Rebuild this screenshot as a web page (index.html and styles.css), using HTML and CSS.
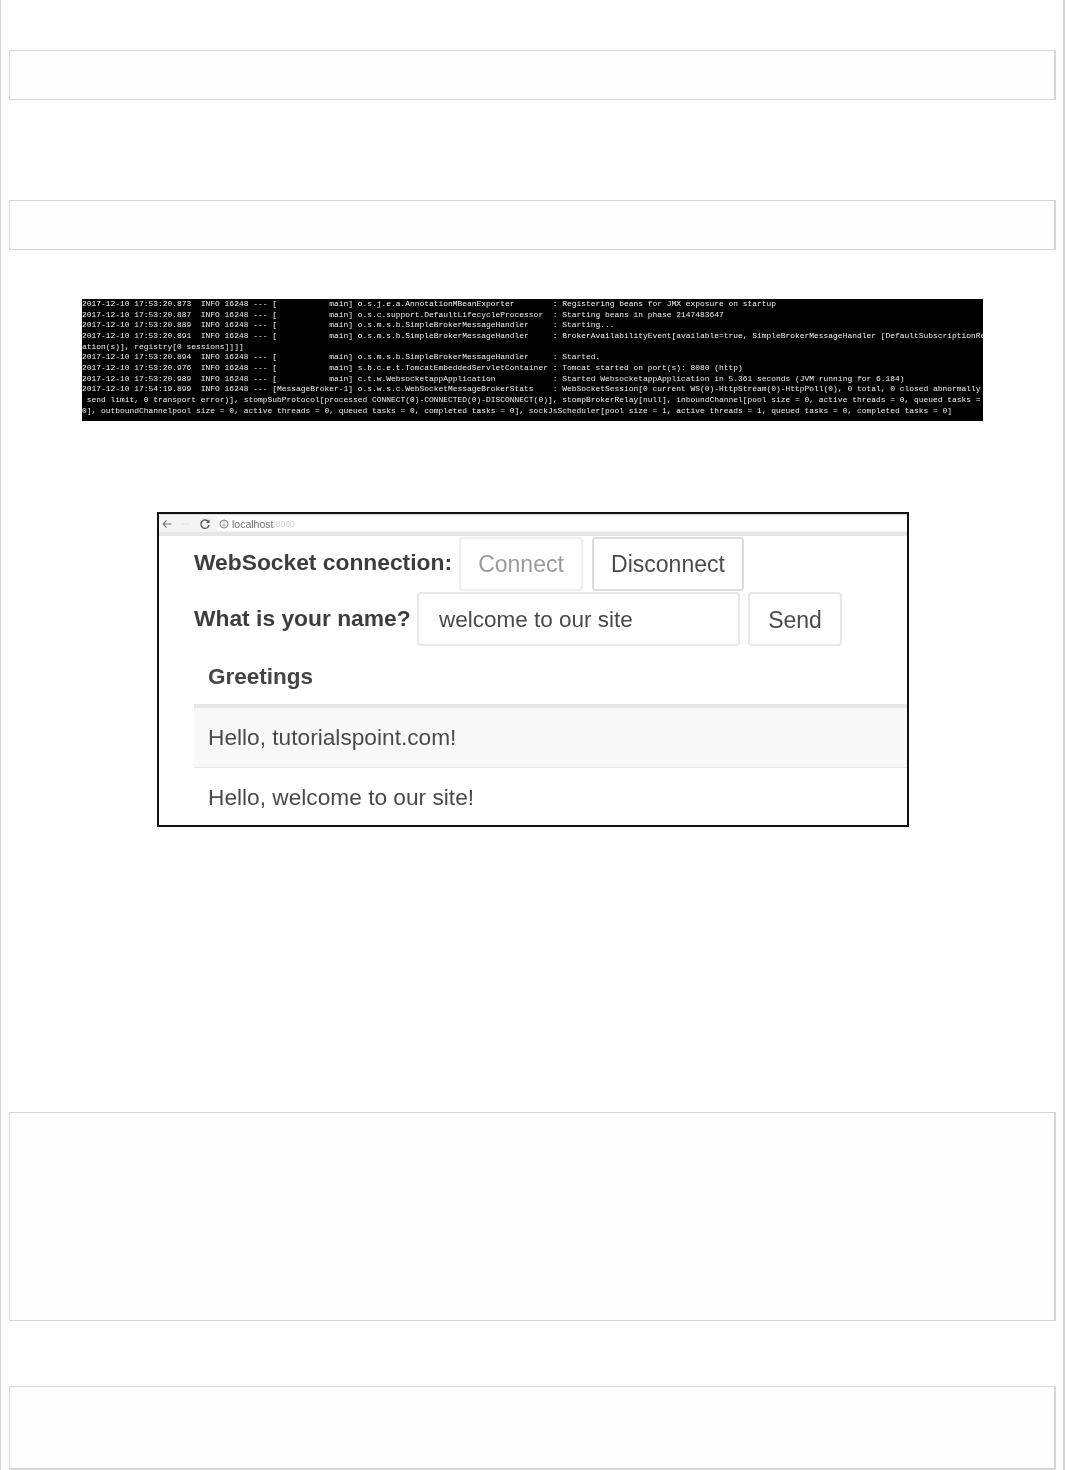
FILE: index.html
```html
<!DOCTYPE html>
<html lang="en">
<head>
<meta charset="utf-8">
<title>WebSocket</title>
<link rel="stylesheet" href="styles.css">
</head>
<body>
<main class="page">
  <div class="code-box box-a"></div>
  <div class="code-box box-b"></div>
  <figure class="shot-log">
<pre class="log">2017-12-10 17:53:20.873  INFO 16248 --- [           main] o.s.j.e.a.AnnotationMBeanExporter        : Registering beans for JMX exposure on startup
2017-12-10 17:53:20.887  INFO 16248 --- [           main] o.s.c.support.DefaultLifecycleProcessor  : Starting beans in phase 2147483647
2017-12-10 17:53:20.889  INFO 16248 --- [           main] o.s.m.s.b.SimpleBrokerMessageHandler     : Starting...
2017-12-10 17:53:20.891  INFO 16248 --- [           main] o.s.m.s.b.SimpleBrokerMessageHandler     : BrokerAvailabilityEvent[available=true, SimpleBrokerMessageHandler [DefaultSubscriptionRe
ation(s)], registry[0 sessions]]]]
2017-12-10 17:53:20.894  INFO 16248 --- [           main] o.s.m.s.b.SimpleBrokerMessageHandler     : Started.
2017-12-10 17:53:20.976  INFO 16248 --- [           main] s.b.c.e.t.TomcatEmbeddedServletContainer : Tomcat started on port(s): 8080 (http)
2017-12-10 17:53:20.989  INFO 16248 --- [           main] c.t.w.WebsocketappApplication            : Started WebsocketappApplication in 5.361 seconds (JVM running for 6.184)
2017-12-10 17:54:19.899  INFO 16248 --- [MessageBroker-1] o.s.w.s.c.WebSocketMessageBrokerStats    : WebSocketSession[0 current WS(0)-HttpStream(0)-HttpPoll(0), 0 total, 0 closed abnormally
 send limit, 0 transport error)], stompSubProtocol[processed CONNECT(0)-CONNECTED(0)-DISCONNECT(0)], stompBrokerRelay[null], inboundChannel[pool size = 0, active threads = 0, queued tasks =
0], outboundChannelpool size = 0, active threads = 0, queued tasks = 0, completed tasks = 0], sockJsScheduler[pool size = 1, active threads = 1, queued tasks = 0, completed tasks = 0]</pre>
  </figure>
  <figure class="shot-app">
    <div class="browser-bar">
      <svg class="nav-icon" viewBox="0 0 12 12" aria-hidden="true"><path d="M10.500 6H2M5.500 2.500 2 6l3.500 3.500" fill="none" stroke="#7a7a7a" stroke-width="1.100"/></svg>
      <svg class="nav-icon nav-forward" viewBox="0 0 12 12" aria-hidden="true"><path d="M1.500 6H10" fill="none" stroke="#e4e4e4" stroke-width="1.200"/></svg>
      <svg class="nav-icon" viewBox="0 0 12 12" aria-hidden="true"><path d="M9.800 4.200A4.200 4.200 0 1 0 10.200 7" fill="none" stroke="#555" stroke-width="1.300"/><path d="M10.500 1.500v3.500H7z" fill="#555"/></svg>
      <div class="address">
        <svg class="info-icon" viewBox="0 0 10 10" aria-hidden="true"><circle cx="5" cy="5" r="4" fill="none" stroke="#777" stroke-width=".9"/><path d="M5 4.300v3M5 2.400v1" stroke="#777" stroke-width="1"/></svg>
        <span class="host">localhost</span><span class="port">:8080</span>
      </div>
    </div>
    <div class="app">
      <div class="row row-connect">
        <span class="label label-connect">WebSocket connection:</span>
        <span class="btn btn-disabled">Connect</span>
        <span class="btn btn-active">Disconnect</span>
      </div>
      <div class="row row-name">
        <span class="label label-name">What is your name?</span>
        <span class="field">welcome to our site</span>
        <span class="btn btn-send">Send</span>
      </div>
      <div class="table">
        <div class="th">Greetings</div>
        <div class="td td-odd">Hello, tutorialspoint.com!</div>
        <div class="td">Hello, welcome to our site!</div>
      </div>
    </div>
  </figure>
  <div class="code-box box-c"></div>
  <div class="code-box box-d"></div>
</main>
</body>
</html>
```
FILE: styles.css
```css
* { box-sizing: border-box; }
html, body { margin: 0; padding: 0; background: #fff; }
body { height: 1470px; overflow: hidden; font-family: "Liberation Sans", Arial, sans-serif; }

.page {
  width: 1065px;
  height: 1470px;
  border-left: 1px solid #d6d6d6;
  border-right: 2px solid #d3d3d3;
  padding: 50px 7px 0 8px;
  overflow: hidden;
  display: flex;
  flex-direction: column;
  align-items: stretch;
}

.code-box {
  flex: none;
  background: #fefefe;
  border: 1px solid #d6d6d6;
  border-right-width: 2px;
}
.box-a { height: 50px; }
.box-b { height: 50px; margin-top: 100px; }
.box-c { height: 209px; margin-top: 285px; }
.box-d { height: 84px; margin-top: 65px; border-bottom-width: 2px; }

figure { margin: 0; flex: none; }

.shot-log {
  margin: 49px 0 0 73px;
  width: 901px;
  height: 122px;
  background: #000;
  overflow: hidden;
}
.log {
  margin: 0;
  padding: 0;
  font-family: "Liberation Mono", "DejaVu Sans Mono", monospace;
  font-size: 7.93px;
  line-height: 10.65px;
  color: #f0f0f0;
  white-space: pre;
  filter: blur(.5px);
}

.shot-app {
  margin: 91px 0 0 148px;
  width: 752px;
  height: 315px;
  border: 2px solid #111;
  background: #fff;
  overflow: hidden;
  color: #444;
}

.browser-bar {
  height: 22px;
  display: flex;
  align-items: center;
  gap: 7px;
  padding: 0 0 0 2px;
  background: #f4f4f4;
  border-top: 1px solid #ddd;
  border-bottom: 4px solid #e6e6e6;
  filter: blur(.4px);
}
.nav-icon { width: 12px; height: 12px; flex: none; }
.address {
  flex: 1;
  height: 15px;
  display: flex;
  align-items: center;
  gap: 3px;
  padding-left: 1px;
  background: #fff;
}
.info-icon { width: 10px; height: 10px; flex: none; }
.host { color: #707070; font-size: 10.5px; }
.port { color: #d0d0d0; font-size: 8.5px; margin-left: -3px; }

.app { padding: 0 0 0 35px; filter: blur(.5px); }

.row { display: flex; align-items: center; }
.row-connect { height: 55px; }
.row-name { height: 56px; }

.label { font-weight: 700; font-size: 22.8px; color: #3d3d3d; white-space: nowrap; }
.label-connect { width: 265px; margin-top: -3px; }
.label-name { width: 223px; margin-top: -1px; }

.btn, .field {
  display: flex;
  align-items: center;
  justify-content: center;
  height: 54px;
  padding-top: 2px;
  font-size: 23px;
  color: #4a4a4a;
  background: #fff;
  border: 1px solid #e2e2e2;
  border-radius: 4px;
  flex: none;
}
.btn-disabled { width: 124px; color: #9a9a9a; border: 2px solid #f0f0f0; }
.btn-active { width: 152px; margin-left: 9px; border: 2px solid #dcdcdc; }
.field { width: 323px; justify-content: flex-start; padding-left: 20px; font-size: 22.5px; border: 2px solid #e8e8e8; }
.btn-send { width: 94px; margin-left: 8px; border: 2px solid #e8e8e8; }

.table { margin-top: 1px; }
.th {
  height: 60px;
  padding: 2px 0 0 14px;
  display: flex;
  align-items: center;
  font-weight: 700;
  font-size: 22.5px;
  color: #444;
  border-bottom: 4px solid #e6e6e6;
}
.td {
  height: 59px;
  padding: 0 0 0 14px;
  display: flex;
  align-items: center;
  font-size: 22.7px;
  color: #4a4a4a;
}
.td-odd { background: #f8f8f8; height: 60px; border-bottom: 1px solid #e8e8e8; }
```
